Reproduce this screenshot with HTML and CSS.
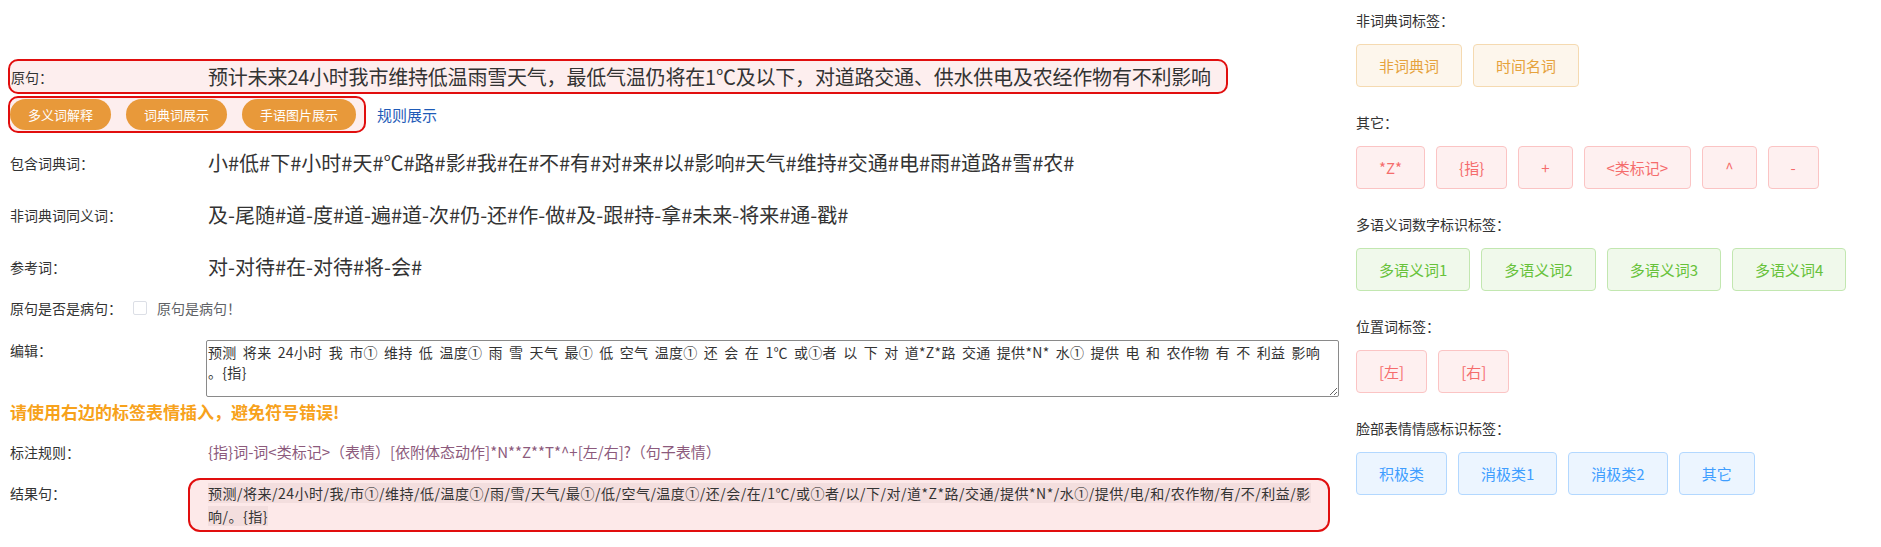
FILE: index.html
```html
<!DOCTYPE html>
<html lang="zh-CN">
<head>
<meta charset="utf-8">
<title>标注</title>
<link rel="stylesheet" href="styles.css">
</head>
<body>
<div class="page">
  <div class="main">
    <div class="orig-box">
      <span class="orig-lbl">原句：</span>
      <span class="orig-text">预计未来24小时我市维持低温雨雪天气，最低气温仍将在1℃及以下，对道路交通、供水供电及农经作物有不利影响</span>
    </div>
    <div class="btn-row">
      <div class="btn-group">
        <button class="pill w1">多义词解释</button>
        <button class="pill w1">词典词展示</button>
        <button class="pill">手语图片展示</button>
      </div>
      <a class="link">规则展示</a>
    </div>

    <div class="row list first">
      <div class="lbl">包含词典词：</div>
      <div class="val">小#低#下#小时#天#℃#路#影#我#在#不#有#对#来#以#影响#天气#维持#交通#电#雨#道路#雪#农#</div>
    </div>
    <div class="row list">
      <div class="lbl">非词典词同义词：</div>
      <div class="val">及-尾随#道-度#道-遍#道-次#仍-还#作-做#及-跟#持-拿#未来-将来#通-戳#</div>
    </div>
    <div class="row list">
      <div class="lbl">参考词：</div>
      <div class="val">对-对待#在-对待#将-会#</div>
    </div>

    <div class="row check-row">
      <span class="lbl-inline">原句是否是病句：</span>
      <span class="checkbox"></span>
      <span class="check-text">原句是病句！</span>
    </div>

    <div class="row edit-row">
      <div class="lbl">编辑：</div>
      <textarea class="editor">预测 将来 24小时 我 市① 维持 低 温度① 雨 雪 天气 最① 低 空气 温度① 还 会 在 1℃ 或①者 以 下 对 道*Z*路 交通 提供*N* 水① 提供 电 和 农作物 有 不 利益 影响
。{指}</textarea>
    </div>

    <div class="warn">请使用右边的标签表情插入，避免符号错误!</div>

    <div class="row rule-row">
      <div class="lbl">标注规则：</div>
      <div class="rule">{指}词-词&lt;类标记&gt;（表情）[依附体态动作]*N**Z**T*^+[左/右]?（句子表情）</div>
    </div>

    <div class="row result-row">
      <div class="lbl">结果句：</div>
      <div class="result-box"><span class="hl">预测/将来/24小时/我/市①/维持/低/温度①/雨/雪/天气/最①/低/空气/温度①/还/会/在/1℃/或①者/以/下/对/道*Z*路/交通/提供*N*/水①/提供/电/和/农作物/有/不/利益/影</span><br><span class="hl">响/。{指}</span></div>
    </div>
  </div>

  <aside class="side">
    <section class="sec">
      <div class="sec-title">非词典词标签：</div>
      <div class="tags">
        <span class="tag orange">非词典词</span>
        <span class="tag orange">时间名词</span>
      </div>
    </section>
    <section class="sec">
      <div class="sec-title">其它：</div>
      <div class="tags">
        <span class="tag red">*Z*</span>
        <span class="tag red">{指}</span>
        <span class="tag red">+</span>
        <span class="tag red">&lt;类标记&gt;</span>
        <span class="tag red">^</span>
        <span class="tag red">-</span>
      </div>
    </section>
    <section class="sec">
      <div class="sec-title">多语义词数字标识标签：</div>
      <div class="tags">
        <span class="tag green">多语义词1</span>
        <span class="tag green">多语义词2</span>
        <span class="tag green">多语义词3</span>
        <span class="tag green">多语义词4</span>
      </div>
    </section>
    <section class="sec">
      <div class="sec-title">位置词标签：</div>
      <div class="tags">
        <span class="tag red">[左]</span>
        <span class="tag red">[右]</span>
      </div>
    </section>
    <section class="sec">
      <div class="sec-title">脸部表情情感标识标签：</div>
      <div class="tags">
        <span class="tag blue">积极类</span>
        <span class="tag blue">消极类1</span>
        <span class="tag blue">消极类2</span>
        <span class="tag blue">其它</span>
      </div>
    </section>
  </aside>
</div>
</body>
</html>
```

FILE: styles.css
```css
* { box-sizing: border-box; }
html, body {
  margin: 0;
  background: #fff;
}
body {
  font-family: "Noto Sans CJK SC", "Noto Sans", sans-serif;
  color: #333;
  font-size: 14px;
}
.page {
  display: grid;
  grid-template-columns: 1348px 1fr;
  padding: 0 8px;
}
.main {
  padding-top: 59px;
  display: flex;
  flex-direction: column;
  align-items: flex-start;
}
.orig-box {
  width: 1220px;
  height: 35px;
  border: 2px solid #e10e0e;
  border-radius: 10px;
  background: #fdeeee;
  display: flex;
  align-items: center;
  padding-left: 1px;
  white-space: nowrap;
}
.orig-lbl {
  width: 197px;
  flex: none;
  font-size: 14px;
}
.orig-text {
  font-size: 20px;
  letter-spacing: -0.2px;
  color: #333;
}
.btn-row {
  margin-top: 2px;
  display: flex;
  align-items: center;
  gap: 11px;
}
.btn-group {
  display: flex;
  gap: 15px;
  border: 2px solid #e10e0e;
  border-radius: 10px;
  background: #fdeeee;
  padding: 1px 8px 1px 0;
}
.pill {
  height: 31px;
  border: none;
  border-radius: 16px;
  background: #e8993a;
  color: #fff;
  font-family: inherit;
  font-size: 13px;
  padding: 0 18px;
  line-height: 31px;
}
.link {
  color: #1e5bb8;
  font-size: 15px;
}
.row {
  display: flex;
  padding-left: 2px;
}
.lbl {
  width: 196px;
  flex: none;
  font-size: 14px;
  line-height: 20px;
}
.list {
  align-items: center;
  height: 30px;
  margin-top: 22px;
}
.list.first {
  margin-top: 15px;
}
.list .val {
  font-size: 20px;
  line-height: 30px;
  padding-left: 2px;
  white-space: nowrap;
}
.check-row {
  margin-top: 16px;
  align-items: center;
  line-height: 20px;
}
.lbl-inline { font-size: 14px; }
.checkbox {
  width: 14px;
  height: 14px;
  border: 1px solid #dcdfe6;
  border-radius: 2px;
  background: #fff;
  margin-left: 11px;
}
.check-text {
  margin-left: 10px;
  color: #606266;
}
.edit-row {
  margin-top: 22px;
}
.editor {
  width: 1133px;
  height: 57px;
  border: 1px solid #8a8a8a;
  border-radius: 2px;
  font-family: inherit;
  font-size: 14px;
  line-height: 20px;
  letter-spacing: 0.3px;
  word-spacing: 2.8px;
  color: #333;
  padding: 1px 1px;
  resize: both;
}
.warn {
  margin-top: 3px;
  padding-left: 2px;
  color: #f7a21b;
  font-weight: bold;
  font-size: 17px;
  line-height: 24px;
}
.rule-row {
  margin-top: 18px;
}
.rule {
  color: #8c5a7c;
  font-size: 15px;
  line-height: 20px;
  padding-left: 2px;
}
.result-row {
  margin-top: 16px;
}
.result-row .lbl {
  padding-top: 5px;
}
.result-box {
  margin-left: -18px;
  width: 1142px;
  height: 54px;
  border: 2px solid #e10e0e;
  border-radius: 12px;
  background: #fde9e9;
  padding: 2px 10px 0 18px;
  font-size: 14px;
  line-height: 23px;
  letter-spacing: 0.5px;
  color: #333;
  white-space: nowrap;
}
.hl {
  background: rgba(120, 90, 90, 0.07);
}
.side {
  padding-top: 10px;
}
.sec {
  margin-bottom: 25px;
}
.sec-title {
  font-size: 14px;
  line-height: 20px;
  color: #333;
  margin-bottom: 14px;
}
.tags {
  display: flex;
  gap: 11px;
}
.tag {
  height: 43px;
  line-height: 41px;
  padding: 0 22px;
  border: 1px solid;
  border-radius: 4px;
  font-size: 15px;
  white-space: nowrap;
}
.orange { background: #fdf6ec; border-color: #f5dab1; color: #e6a23c; }
.red { background: #fef0f0; border-color: #fbc4c4; color: #f56c6c; }
.green { background: #f0f9eb; border-color: #c2e7b0; color: #67c23a; }
.blue { background: #ecf5ff; border-color: #b3d8ff; color: #409eff; }
```
